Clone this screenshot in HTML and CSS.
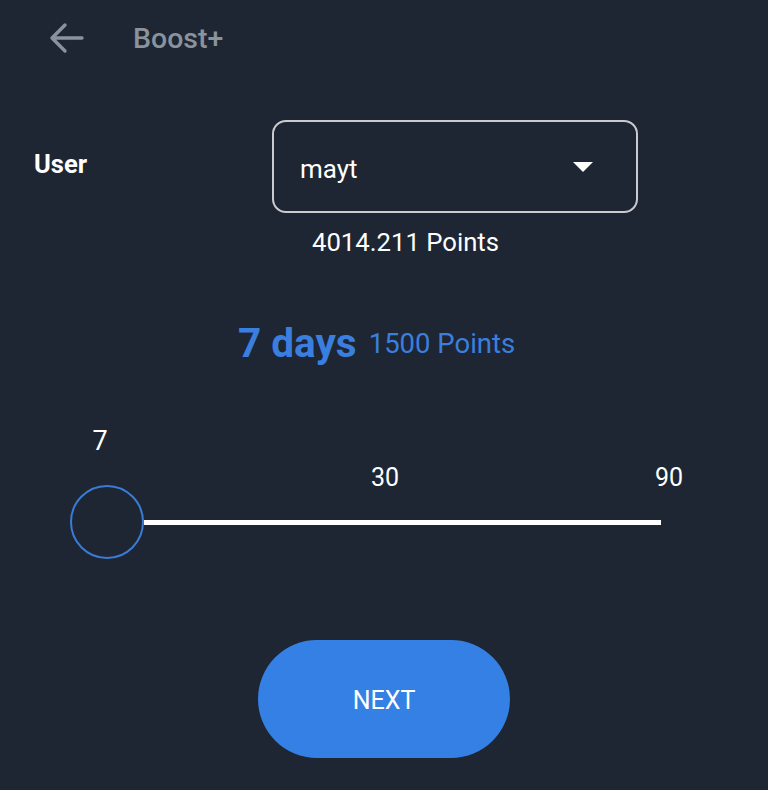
FILE: index.html
```html
<!DOCTYPE html>
<html>
<head>
<meta charset="utf-8">
<link rel="stylesheet" href="styles.css">
</head>
<body>
<div class="screen">
  <header class="topbar">
    <svg class="back" width="36" height="32" viewBox="0 0 36 32" aria-hidden="true">
      <path d="M34 16H4M17 3L4 16l13 13" fill="none" stroke="#8a929c" stroke-width="3.4" stroke-linecap="round" stroke-linejoin="round"/>
    </svg>
    <span class="title">Boost+</span>
  </header>

  <section class="user-row">
    <span class="label">User</span>
    <div class="select">
      <span class="select-value">mayt</span>
      <span class="caret"></span>
    </div>
  </section>
  <div class="balance">4014.211 Points</div>

  <div class="summary">
    <span class="days">7 days</span>
    <span class="cost">1500 Points</span>
  </div>

  <div class="slider">
    <span class="tick tick-current">7</span>
    <span class="tick tick-mid">30</span>
    <span class="tick tick-max">90</span>
    <div class="track"></div>
    <div class="thumb"></div>
  </div>

  <div class="actions">
    <button class="next">NEXT</button>
  </div>
</div>
</body>
</html>
```

FILE: styles.css
```css
html, body {
  margin: 0;
  padding: 0;
  background: #1e2633;
}
body {
  font-family: Roboto, "Noto Sans", sans-serif;
  color: #ffffff;
  width: 768px;
  height: 790px;
  overflow: hidden;
}
.screen {
  display: flex;
  flex-direction: column;
}
.topbar {
  height: 76px;
  display: flex;
  align-items: center;
  padding-left: 48px;
}
.back {
  display: block;
}
.title {
  margin-left: 49px;
  font-size: 28.5px;
  font-weight: 500;
  color: #8a929c;
}
.user-row {
  margin-top: 44px;
  display: flex;
  align-items: center;
  padding-left: 34px;
}
.label {
  width: 238px;
  font-size: 25.5px;
  font-weight: 700;
  padding-bottom: 6px;
}
.select {
  box-sizing: border-box;
  width: 366px;
  height: 93px;
  border: 2px solid #c9cbce;
  border-radius: 14px;
  display: flex;
  align-items: center;
  justify-content: space-between;
  padding: 0 43px 0 26px;
}
.select-value {
  font-size: 26px;
  padding-top: 4px;
}
.caret {
  width: 0;
  height: 0;
  border-left: 10px solid transparent;
  border-right: 10px solid transparent;
  border-top: 10px solid #ffffff;
}
.balance {
  margin-top: 15px;
  padding-left: 312px;
  font-size: 25.7px;
  line-height: 28px;
}
.summary {
  margin-top: 64px;
  padding-left: 238px;
  display: flex;
  align-items: center;
  gap: 12px;
  color: #3a7fdf;
}
.days {
  font-size: 40.5px;
  font-weight: 700;
  line-height: 46px;
}
.cost {
  font-size: 27.5px;
  padding-top: 1px;
}
.slider {
  position: relative;
  margin-top: 54px;
  height: 150px;
}
.tick {
  position: absolute;
  font-size: 25px;
  line-height: 30px;
  transform: translateX(-50%);
}
.tick-current { left: 100px; top: 6px; font-size: 27px; }
.tick-mid { left: 385px; top: 43px; }
.tick-max { left: 669px; top: 43px; }
.track {
  position: absolute;
  left: 144px;
  width: 517px;
  top: 100px;
  height: 5px;
  background: #ffffff;
}
.thumb {
  position: absolute;
  left: 70px;
  top: 65px;
  width: 74px;
  height: 74px;
  box-sizing: border-box;
  border: 2px solid #3a7bd6;
  border-radius: 50%;
  background: #1e2633;
}
.actions {
  margin-top: 70px;
  display: flex;
  justify-content: center;
}
.next {
  width: 252px;
  height: 118px;
  border: none;
  border-radius: 59px;
  background: #3580e4;
  color: #ffffff;
  font-family: Roboto, "Noto Sans", sans-serif;
  font-size: 25px;
  font-weight: 400;
  padding: 3px 0 0 0;
}
```
